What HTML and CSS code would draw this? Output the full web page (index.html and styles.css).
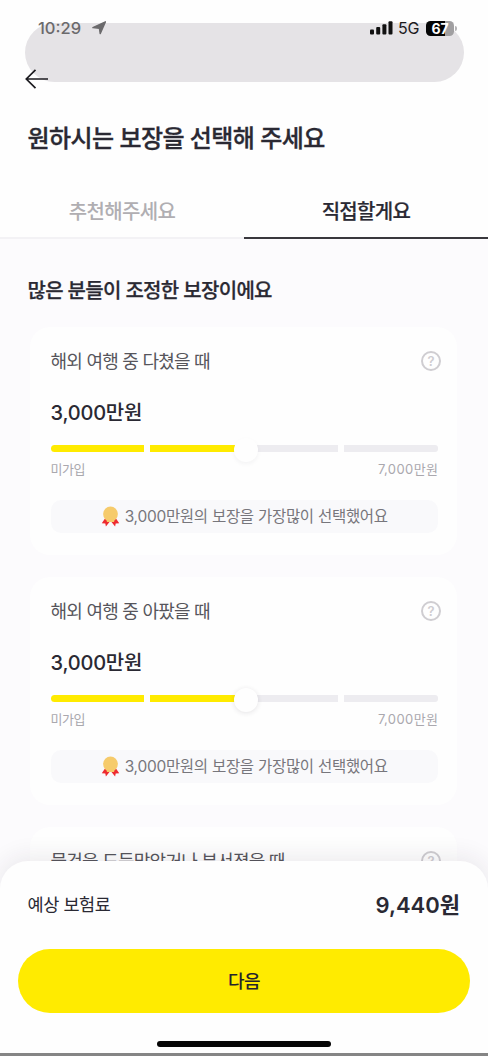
FILE: index.html
```html
<!DOCTYPE html>
<html lang="ko">
<head>
<meta charset="utf-8">
<title>보장 선택</title>
<link rel="stylesheet" href="styles.css">
</head>
<body>
<div class="screen">
  <header class="top">
    <div class="pill"></div>
    <div class="status">
      <span class="clock">10:29</span>
      <svg class="loc" width="14" height="14" viewBox="0 0 14 14"><path d="M13.4 .8 8.2 12.6 7.4 7.2 .9 6.6Z" fill="#6b6a6c" stroke="#6b6a6c" stroke-width="1.4" stroke-linejoin="round"/></svg>
      <svg class="signal" width="23" height="14" viewBox="0 0 23 14" fill="#111"><rect x="0" y="8.5" width="4" height="5" rx="1"/><rect x="6.2" y="6" width="4" height="7.5" rx="1"/><rect x="12.4" y="3.3" width="4" height="10.2" rx="1"/><rect x="18.5" y=".3" width="4" height="13.2" rx="1"/></svg>
      <span class="net">5G</span>
      <span class="battery">67</span>
      <span class="battery-cap"></span>
    </div>
    <svg class="back" width="24" height="20" viewBox="0 0 24 20" fill="none" stroke="#1c1b20" stroke-width="1.7"><path d="M23 10H1.5M10.5 .8 1.3 10l9.2 9.2"/></svg>
    <h1 class="title">원하시는 보장을 선택해 주세요</h1>
    <nav class="tabs">
      <div class="tab">추천해주세요</div>
      <div class="tab tab-on">직접할게요</div>
    </nav>
  </header>
  <main class="content">
    <h2 class="section">많은 분들이 조정한 보장이에요</h2>
    <section class="card">
      <div class="card-head"><span class="name">해외 여행 중 다쳤을 때</span><span class="help">?</span></div>
      <div class="amount">3,000만원</div>
      <div class="slider"><i class="seg on"></i><i class="seg on"></i><i class="seg"></i><i class="seg"></i><b class="thumb faint"></b></div>
      <div class="range"><span class="min">미가입</span><span class="max">7,000만원</span></div>
      <div class="note"><svg class="medal" width="19" height="21" viewBox="0 0 19 21"><path d="M5 11 .8 17.2l3.5.3.6 3.1L9.3 15Zm9 0 4.2 6.2-3.5.3-.6 3.1L9.7 15Z" fill="#ee2b2f"/><circle cx="9.5" cy="8" r="7.4" fill="#f6cb6b"/><path d="M5 12.5 9.5 15.2 14 12.5 13 16H6Z" fill="#f6cb6b"/></svg><span class="note-text">3,000만원의 보장을 가장많이 선택했어요</span></div>
    </section>
    <section class="card">
      <div class="card-head"><span class="name">해외 여행 중 아팠을 때</span><span class="help">?</span></div>
      <div class="amount">3,000만원</div>
      <div class="slider"><i class="seg on"></i><i class="seg on"></i><i class="seg"></i><i class="seg"></i><b class="thumb"></b></div>
      <div class="range"><span class="min">미가입</span><span class="max">7,000만원</span></div>
      <div class="note"><svg class="medal" width="19" height="21" viewBox="0 0 19 21"><path d="M5 11 .8 17.2l3.5.3.6 3.1L9.3 15Zm9 0 4.2 6.2-3.5.3-.6 3.1L9.7 15Z" fill="#ee2b2f"/><circle cx="9.5" cy="8" r="7.4" fill="#f6cb6b"/><path d="M5 12.5 9.5 15.2 14 12.5 13 16H6Z" fill="#f6cb6b"/></svg><span class="note-text">3,000만원의 보장을 가장많이 선택했어요</span></div>
    </section>
    <section class="card">
      <div class="card-head"><span class="name">물건을 도둑맞았거나 부서졌을 때</span><span class="help">?</span></div>
    </section>
  </main>
  <footer class="sheet">
    <div class="total"><span class="total-label">예상 보험료</span><span class="total-value">9,440원</span></div>
    <button class="next">다음</button>
    <div class="home"></div>
  </footer>
</div>
</body>
</html>
```
FILE: styles.css
```css
* { box-sizing: border-box; margin: 0; padding: 0; }
body { font-family: Inter, "Noto Sans CJK KR", sans-serif; background: #fff; color: #2a2933; }
.screen { position: relative; width: 488px; height: 1056px; overflow: hidden; background: #fcfbfd; }
.top { position: relative; height: 239px; padding-top: 14px; background: #fefefe; }
.pill { position: absolute; left: 25px; top: 23px; width: 439px; height: 59px; border-radius: 30px; background: #e5e3e6; }
.status { position: relative; display: flex; align-items: center; height: 28px; padding: 0 32px 0 38px; }
.clock { font-size: 16.5px; font-weight: 500; line-height: 28px; color: #6b6a6c; width: 54px; }
.signal { margin-left: auto; margin-right: 5px; }
.net { font-size: 16px; line-height: 28px; letter-spacing: -.2px; color: #1b1b1d; width: 23px; margin-right: 5px; }
.battery { width: 28px; height: 15px; border-radius: 4.5px; background: linear-gradient(90deg, #050505 67%, #a09fa1 67%); color: #fff; font-size: 14px; font-weight: 700; line-height: 15px; text-align: center; }
.battery-cap { width: 2px; height: 5px; border-radius: 0 2px 2px 0; background: #b5b4b6; margin-left: 1px; margin-right: -1px; }
.back { position: relative; display: block; margin: 27px 0 0 25px; }
.title { margin: 31px 0 0 27.5px; height: 36px; line-height: 38px; font-size: 24px; font-weight: 500; -webkit-text-stroke: .35px; letter-spacing: -.56px; white-space: nowrap; }
.tabs { display: flex; height: 53px; margin-top: 30px; }
.tab { flex: 1; text-align: center; font-size: 20px; font-weight: 500; line-height: 52px; letter-spacing: -.65px; color: #b0aeb2; border-bottom: 2px solid #f3f2f5; }
.tab-on { color: #2a2933; -webkit-text-stroke: .2px; border-bottom-color: #39383d; }
.content { padding: 37px 31px 0 30px; display: flex; flex-direction: column; gap: 21px; }
.section { height: 30px; line-height: 31px; font-size: 20px; font-weight: 500; -webkit-text-stroke: .25px; letter-spacing: -.68px; margin-left: -2.5px; white-space: nowrap; }
.card { height: 228px; border-radius: 20px; background: #fefefe; padding: 19px 19px 0 20.5px; flex: none; }
.card + .card { margin-top: 1px; }
.card-head { display: flex; justify-content: space-between; align-items: center; height: 28px; }
.name { font-size: 18px; line-height: 28px; letter-spacing: -.76px; color: #56555b; white-space: nowrap; padding-top: 3px; }
.help { width: 20px; height: 20px; border: 2px solid #cfcdd1; border-radius: 50%; text-align: center; font-size: 13px; font-weight: 600; line-height: 16px; color: #cfcdd1; margin: 1px -3px 0 0; }
.amount { margin-top: 23px; height: 32px; line-height: 32px; font-size: 20px; font-weight: 500; letter-spacing: -.2px; }
.slider { position: relative; display: flex; gap: 6px; margin-top: 16px; height: 7px; }
.seg { flex: 1; background: #edecf0; }
.seg.on { background: #ffeb00; }
.seg:first-child { border-radius: 4px 0 0 4px; }
.seg:nth-child(3) { margin-left: -6px; }
.seg:nth-child(4) { border-radius: 0 3px 3px 0; }
.thumb { position: absolute; left: 183px; top: -7px; width: 24px; height: 24px; border-radius: 50%; background: #fefefe; box-shadow: 0 1px 5px rgba(40, 35, 50, .12); }
.thumb.faint { box-shadow: 0 2px 4px rgba(40, 35, 50, .05); }
.range { display: flex; justify-content: space-between; margin-top: 7px; height: 20px; line-height: 20px; font-size: 13px; color: #aaa8ae; }
.min { letter-spacing: -.4px; }
.max { letter-spacing: .4px; margin-right: -.4px; }
.note { margin-top: 21px; height: 33px; border-radius: 10px; background: #f9f9fb; display: flex; align-items: center; justify-content: center; gap: 5px; }
.note-text { font-size: 15.5px; line-height: 34px; letter-spacing: -.28px; color: #77767c; white-space: nowrap; }
.sheet { position: absolute; left: 0; top: 861px; width: 488px; height: 195px; border-radius: 28px 28px 0 0; background: #fefefe; box-shadow: 0 -4px 24px rgba(40, 30, 60, .09); }
.sheet::after { content: ""; position: absolute; left: 0; right: 0; bottom: 0; height: 3px; background: #858585; }
.total { display: flex; justify-content: space-between; align-items: center; padding: 28px 28px 0 27.5px; height: 60px; }
.total-label { font-size: 17.5px; line-height: 34px; letter-spacing: -.4px; }
.total-value { font-size: 22px; line-height: 34px; font-weight: 600; }
.next { display: block; margin: 28px 18px 0; width: 452px; height: 64px; border: 0; border-radius: 32px; background: #ffeb00; color: #25242c; font: 500 18px/64px Inter, "Noto Sans CJK KR", sans-serif; letter-spacing: -.6px; padding-top: 1px; }
.home { width: 174px; height: 6px; border-radius: 3px; background: #050505; margin: 28px auto 0; }
```
